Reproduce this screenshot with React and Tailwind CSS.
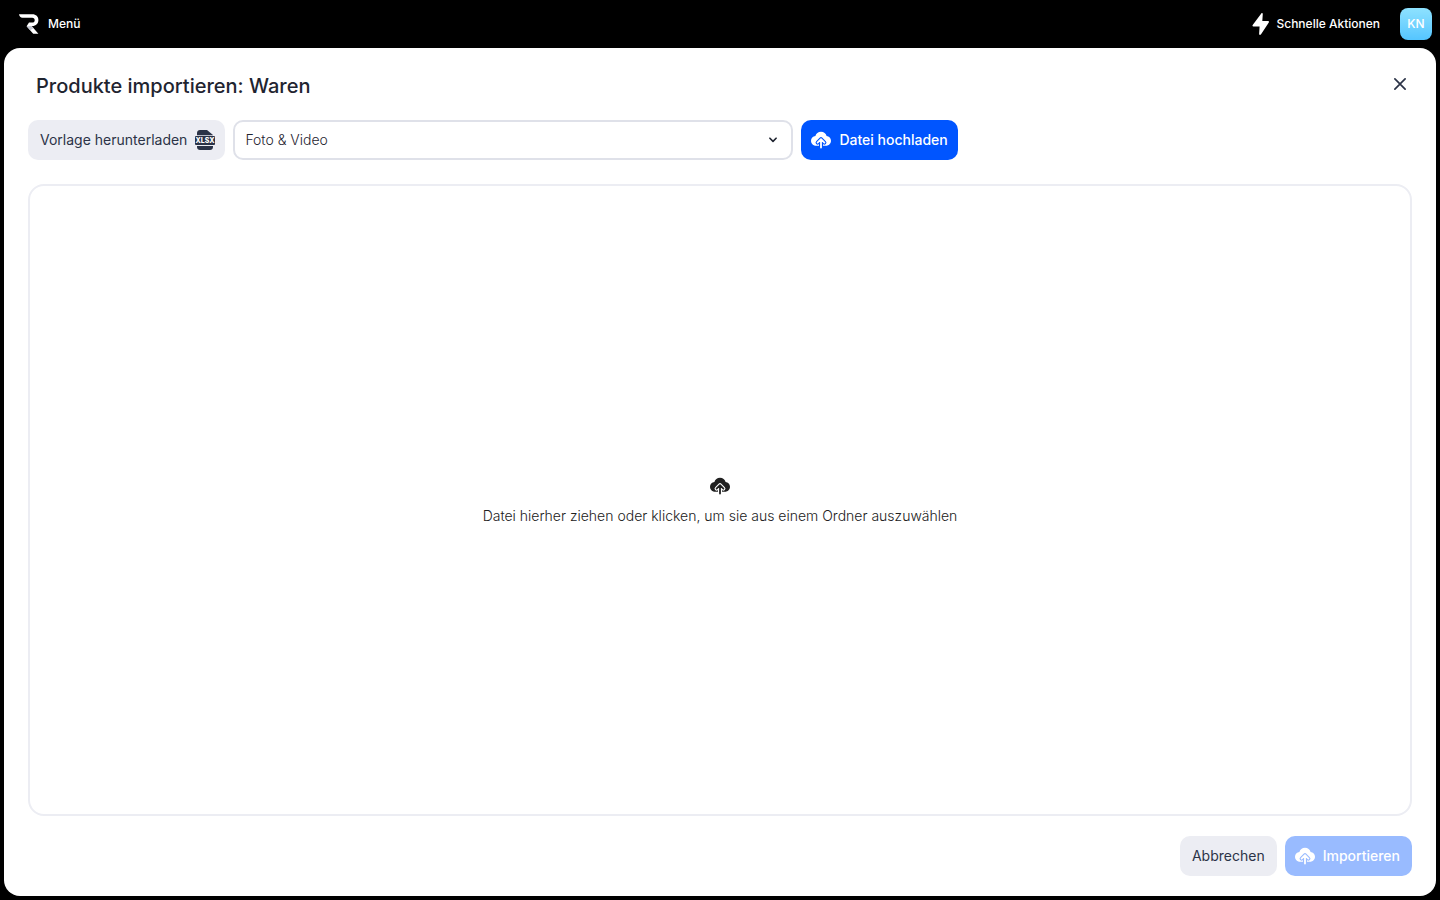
import { useId, useRef, useState } from 'react'

const categories = ['Foto & Video', 'Audio & HiFi', 'Haushalt', 'Sport & Freizeit']

function Logo() {
  return (
    <svg width="20" height="20" viewBox="0 0 20 20" fill="none" aria-hidden="true">
      <path d="M0 0.3H13.4C17 0.3 19.4 2.6 19.4 5.9C19.4 9.4 17 11.9 13.4 11.9H12.6L19.4 19.8H14.2L7.6 12.3L10 8.6H13.2C14.8 8.6 15.7 7.6 15.7 6.2C15.7 4.8 14.8 3.8 13.2 3.8H3.4C1.6 3.8 0.4 2.4 0 0.3Z" fill="#fff" />
      <path d="M7.6 12.3L12.6 11.9L14.6 14.2L11.2 16.3Z" fill="#c3c6d0" />
    </svg>
  )
}

function BoltIcon() {
  return (
    <svg width="18" height="22" viewBox="0 0 18 22" aria-hidden="true">
      <path d="M9.3 0.4C9.7 -0.1 10.9 0.1 10.8 0.8L10.3 8H16C16.9 8 17.3 8.8 16.8 9.5L8.9 21.5C8.5 22.1 7 21.8 7.1 21.1L7.6 13.6H1.4C0.6 13.6 0.2 12.8 0.7 12.1Z" fill="#fff" />
    </svg>
  )
}

function CloudIcon() {
  const id = useId()
  const arrow = 'M10 17.5V9.6M6.6 12.6L10 9.2L13.4 12.6'
  return (
    <svg width="20" height="20" viewBox="0 0 20 20" aria-hidden="true">
      <mask id={id} maskUnits="userSpaceOnUse" x="0" y="0" width="20" height="20">
        <rect width="20" height="20" fill="#fff" />
        <path d={arrow} fill="none" stroke="#000" strokeWidth="4" strokeLinecap="round" strokeLinejoin="round" />
      </mask>
      <path mask={`url(#${id})`} fill="currentColor" d="M10 1.8C12.8 1.8 15 3.6 15.6 6.1C18.1 6.4 20 8.4 20 10.8C20 13.5 17.8 15.8 15 15.8H5C2.2 15.8 0 13.5 0 10.8C0 8.4 1.9 6.4 4.4 6.1C5 3.6 7.2 1.8 10 1.8Z" />
      <path d={arrow} fill="none" stroke="currentColor" strokeWidth="1.8" strokeLinecap="round" strokeLinejoin="round" />
    </svg>
  )
}

function XlsxIcon() {
  return (
    <svg width="20" height="20" viewBox="0 0 20 20" aria-hidden="true">
      <path d="M5 0H12L18 5V5.2H2V3C2 1.3 3.3 0 5 0Z" fill="#2b3347" />
      <rect x="0" y="6" width="20" height="9" rx="1" fill="#2b3347" />
      <path d="M2 16H18V17C18 18.7 16.7 20 15 20H5C3.3 20 2 18.7 2 17Z" fill="#2b3347" />
      <text x="10" y="13" textAnchor="middle" fontSize="7" fontWeight="800" fill="#fff">XLSX</text>
    </svg>
  )
}

function TopBar() {
  return (
    <header className="flex h-12 shrink-0 items-center justify-between pr-2 pl-[19px] text-white">
      <button type="button" className="flex items-center gap-[9px] text-[12px] leading-4 font-medium">
        <Logo />
        Menü
      </button>
      <div className="flex items-center gap-5">
        <button type="button" className="flex items-center gap-1.5 text-[12px] leading-4 font-medium">
          <BoltIcon />
          Schnelle Aktionen
        </button>
        <button type="button" className="size-8 rounded-lg bg-linear-to-b from-[#8ee2ff] to-[#54c5ff] text-[12px] font-medium">
          KN
        </button>
      </div>
    </header>
  )
}

export default function App() {
  const [category, setCategory] = useState(categories[0])
  const [file, setFile] = useState(null)
  const fileInput = useRef(null)

  const pickFile = () => fileInput.current?.click()

  const onDrop = (e) => {
    e.preventDefault()
    setFile(e.dataTransfer.files?.[0] || null)
  }

  return (
    <div className="flex min-h-screen flex-col bg-black font-['Inter',sans-serif] text-[14px] leading-5 text-[#2b3347]">
      <TopBar />
      <main className="mx-1 mb-1 flex grow flex-col rounded-2xl bg-white px-6 pt-6 pb-5">
        <div className="flex items-start justify-between pr-1 pl-2">
          <h1 className="text-[20px] leading-7 font-medium text-[#1f2430]">Produkte importieren: Waren</h1>
          <button type="button" aria-label="Schließen" className="p-0.5 pt-1">
            <svg width="12" height="16" viewBox="0 0 12 16" fill="none" stroke="#2b3347" strokeWidth="1.7" strokeLinecap="round" aria-hidden="true">
              <path d="M0.9 2.9L11.1 13.1M11.1 2.9L0.9 13.1" />
            </svg>
          </button>
        </div>

        <div className="mt-5 flex gap-2">
          <button type="button" className="flex h-10 items-center gap-2 rounded-[10px] bg-[#ecedf3] pr-2.5 pl-3">
            Vorlage herunterladen
            <XlsxIcon />
          </button>
          <div className="grid w-[560px] items-center">
            <select
              aria-label="Kategorie"
              value={category}
              onChange={(e) => setCategory(e.target.value)}
              className="col-start-1 row-start-1 h-10 w-full appearance-none rounded-[10px] border-2 border-[#dfe1e9] bg-white pr-10 pl-2.5 font-light text-[#1f2430]"
            >
              {categories.map((c) => <option key={c}>{c}</option>)}
            </select>
            <svg className="pointer-events-none col-start-1 row-start-1 mr-4 justify-self-end" width="8" height="6" viewBox="0 0 8 6" fill="none" stroke="#1f2430" strokeWidth="1.6" strokeLinecap="round" strokeLinejoin="round" aria-hidden="true">
              <path d="M0.9 1.2L4 4.4L7.1 1.2" />
            </svg>
          </div>
          <button type="button" onClick={pickFile} className="flex h-10 items-center gap-2 rounded-[10px] bg-[#0055ff] px-2.5 font-medium text-white">
            <CloudIcon />
            Datei hochladen
          </button>
        </div>

        <label
          onDragOver={(e) => e.preventDefault()}
          onDrop={onDrop}
          className="mt-6 flex grow cursor-pointer flex-col items-center justify-center gap-2.5 rounded-2xl border-2 border-[#ecedf3] pt-0.5 font-light text-[#212121]"
        >
          <CloudIcon />
          {file ? file.name : 'Datei hierher ziehen oder klicken, um sie aus einem Ordner auszuwählen'}
          <input ref={fileInput} type="file" accept=".xlsx" className="hidden" onChange={(e) => setFile(e.target.files?.[0] || null)} />
        </label>

        <div className="mt-5 flex justify-end gap-2">
          <button type="button" className="h-10 rounded-[10px] bg-[#ecedf3] px-3">
            Abbrechen
          </button>
          <button type="button" disabled={!file} className="flex h-10 items-center gap-2 rounded-[10px] bg-[#0055ff] pr-3 pl-2.5 font-medium text-white disabled:bg-[#99bbff]">
            <CloudIcon />
            Importieren
          </button>
        </div>
      </main>
    </div>
  )
}
